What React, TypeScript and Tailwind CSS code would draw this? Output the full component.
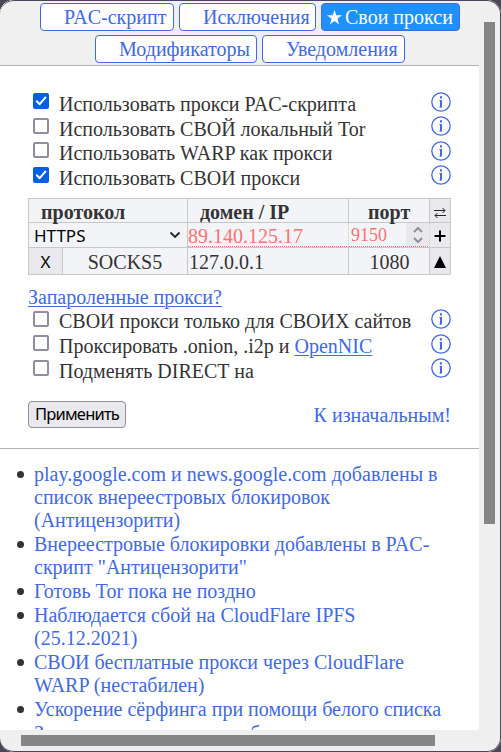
import React from 'react';

function Tab({ label, w, active, pad }: { label: string; w: string; active?: boolean; pad: string }) {
  return (
    <button
      className={`flex h-7 items-center whitespace-nowrap rounded-[4px] border text-[20px] leading-none ${w} ${pad} ${
        active ? 'border-[#4169e1] bg-[#1e90ff] text-white' : 'border-[#4169e1] bg-white text-[#4169e1]'
      }`}
    >
      {active && (
        <svg viewBox="0 0 14 14" className="mr-[3px] size-[15px] shrink-0" fill="currentColor">
          <path d="M7 0l1.7 5h5.3l-4.3 3.2 1.6 5.3L7 10.3l-4.3 3.2 1.6-5.3L0 5h5.3z" />
        </svg>
      )}
      <span>{label}</span>
    </button>
  );
}

function InfoIcon() {
  return (
    <svg viewBox="0 0 20 20" className="size-5 shrink-0" fill="none" stroke="#4169e1">
      <circle cx="10" cy="10" r="9.2" strokeWidth="1.3" />
      <path d="M10 8v7.500M10 4.300v2.200" strokeWidth="2" />
      <path d="M8.500 8.500H10M8.500 15H10" strokeWidth="1" />
    </svg>
  );
}

function Check({ on }: { on?: boolean }) {
  return on ? (
    <svg viewBox="0 0 16 16" className="block size-4 shrink-0">
      <rect width="16" height="16" rx="2" fill="#0060df" />
      <path d="M3.800 8.300l2.900 2.900 5.700-6.700" fill="none" stroke="#fff" strokeWidth="2" strokeLinecap="round" strokeLinejoin="round" />
    </svg>
  ) : (
    <span className="block size-4 shrink-0 rounded-[2px] border-2 border-[#8f8f9d] bg-white" />
  );
}

type Row = { on?: boolean; text: React.ReactNode; h: string; box: string; label: string };

function Option({ on, text, h, box, label }: Row) {
  return (
    <div className={`flex items-start pl-[33px] pr-[28px] ${h}`}>
      <div className={box}><Check on={on} /></div>
      <span className={`ml-[10px] flex-1 whitespace-nowrap leading-[23px] ${label}`}>{text}</span>
      <InfoIcon />
    </div>
  );
}

const link = 'underline decoration-1 underline-offset-2 text-[#4169e1]';

const news = [
  ['play.google.com и news.google.com добавлены в', 'список внереестровых блокировок', '(Антицензорити)'],
  ['Внереестровые блокировки добавлены в PAC-', 'скрипт "Антицензорити"'],
  ['Готовь Tor пока не поздно'],
  ['Наблюдается сбой на CloudFlare IPFS', '(25.12.2021)'],
  ['СВОИ бесплатные прокси через CloudFlare', 'WARP (нестабилен)'],
  ['Ускорение сёрфинга при помощи белого списка'],
  ['Знакомимся с новостями блога'],
];

export default function App() {
  return (
    <div className="h-[752px] w-[501px] overflow-hidden bg-[#4b4656]">
      <div className="relative flex h-[752px] w-[501px] flex-col overflow-hidden rounded-[14px] bg-[#efefef] font-['Liberation_Serif',serif] text-[20px] text-[#333]">
        <div className="flex h-[730px]">
          <main className="flex h-[730px] w-[479px] flex-col overflow-hidden bg-white">
            <header className="flex h-[66px] shrink-0 flex-col gap-1 border-b border-[#b3b3b3] bg-[#f0f0f0] pt-[3px]">
              <div className="flex gap-[5px] pl-10">
                <Tab label="PAC-скрипт" w="w-[134px]" pad="pl-[23px]" />
                <Tab label="Исключения" w="w-[137px]" pad="pl-[23px]" />
                <Tab label="Свои прокси" w="w-[139px]" pad="pl-[5px]" active />
              </div>
              <div className="flex gap-[5px] pl-[95px]">
                <Tab label="Модификаторы" w="w-[162px]" pad="pl-[23px]" />
                <Tab label="Уведомления" w="w-[143px]" pad="pl-[23px]" />
              </div>
            </header>
            <section className="flex h-[132px] shrink-0 flex-col pt-[26px]">
              <Option on text="Использовать прокси PAC-скрипта" h="h-[24px]" box="pt-px" label="pt-px" />
              <Option text="Использовать СВОЙ локальный Tor" h="h-[25px]" box="pt-[2px]" label="pt-[2px]" />
              <Option text="Использовать WARP как прокси" h="h-[24px]" box="pt-px" label="pt-px" />
              <Option on text="Использовать СВОИ прокси" h="h-[25px]" box="pt-[2px]" label="pt-[2px]" />
            </section>
            <div className="ml-[28px] flex h-[77px] w-[423px] shrink-0 flex-col divide-y divide-[#c8c8c8] border border-[#c8c8c8] bg-[#f3f4f7]">
              <div className="flex h-6 divide-x divide-[#c8c8c8] font-bold leading-[27px]">
                <span className="w-[159px] pl-3">протокол</span>
                <span className="w-[161px] pl-3">домен / IP</span>
                <span className="w-[81px] pl-[19px]">порт</span>
                <span className="flex flex-1 items-center justify-center bg-[#e9e9ed] pt-1">
                  <svg viewBox="0 0 12 12" className="size-3" fill="none" stroke="#222">
                    <path d="M0 3.500h11M8.500 1L11 3.500 8.500 6M12 8.500H1M3.500 6L1 8.500l2.500 2.500" />
                  </svg>
                </span>
              </div>
              <div className="flex h-[25px] divide-x divide-[#c8c8c8]">
                <span className="flex w-[159px] items-center justify-between pl-[5px] pr-[6px] font-['Noto_Sans',sans-serif] text-[17px] leading-none text-black">
                  HTTPS
                  <svg viewBox="0 0 12 8" className="h-2 w-3" fill="none" stroke="#222" strokeWidth="1.8"><path d="M1.500 1.500L6 6l4.500-4.500" /></svg>
                </span>
                <span className="w-[161px] border-b border-dotted border-b-[#ff6b6b] leading-[27px] text-[#f87272]">89.140.125.17</span>
                <span className="flex w-[81px] justify-between border-b border-dotted border-b-[#ff6b6b] pl-[2px] text-[18px] leading-[25px] text-[#f87272]">
                  9150
                  <span className="flex w-[23px] items-center justify-center bg-[#e9e9ed]">
                    <svg viewBox="0 0 10 16" className="h-4 w-2.5" fill="none" stroke="#8f8f9d" strokeWidth="2"><path d="M1 5l4-4 4 4M1 11l4 4 4-4" /></svg>
                  </span>
                </span>
                <span className="flex flex-1 items-center justify-center bg-[#e9e9ed] pt-px">
                  <svg viewBox="0 0 12 12" className="size-3" stroke="#000" strokeWidth="2"><path d="M6 .5v11M.5 6h11" /></svg>
                </span>
              </div>
              <div className="flex h-[26px] divide-x divide-[#c8c8c8] leading-[28px]">
                <span className="w-[34px] bg-[#e9e9ed] text-center font-['Noto_Sans',sans-serif] text-[17px] text-black">X</span>
                <span className="w-[125px] text-center">SOCKS5</span>
                <span className="w-[161px] pl-px">127.0.0.1</span>
                <span className="w-[81px] pl-px text-center">1080</span>
                <span className="flex flex-1 items-center justify-center bg-[#e9e9ed] pt-[2px]">
                  <svg viewBox="0 0 12 12" className="size-3"><path d="M6 0l6 12H0z" /></svg>
                </span>
              </div>
            </div>
            <div className="h-[34px] shrink-0 pl-[28px] pt-[11px] leading-[23px]"><a className={link}>Запароленные прокси?</a></div>
            <section className="flex h-[92px] shrink-0 flex-col">
              <Option text="СВОИ прокси только для СВОИХ сайтов" h="h-[25px]" box="pt-[2px]" label="pt-px" />
              <Option text={<>Проксировать .onion, .i2p и <a className={link}>OpenNIC</a></>} h="h-[24px]" box="pt-px" label="pt-px" />
              <Option text="Подменять DIRECT на" h="h-[25px]" box="pt-[2px]" label="pt-[2px]" />
            </section>
            <div className="flex h-[48px] shrink-0 items-start justify-between border-b border-[#b3b3b3] pl-[28px] pr-[28px]">
              <button className="h-[27px] w-[98px] whitespace-nowrap rounded-[4px] border border-[#8f8f9d] bg-[#e9e9ed] text-center font-['Noto_Sans',sans-serif] text-[16.500px] leading-none tracking-[-0.8px] text-black">Применить</button>
              <a className="pt-[3px] leading-[23px] text-[#4169e1]">К изначальным!</a>
            </div>
            <ul className="shrink-0 pt-[14px] text-[#4169e1]">
              {news.map((n) => (
                <li key={n[0]} className="mb-px flex whitespace-nowrap pl-[17px] leading-[23px]">
                  <span className="mr-[10px] mt-[8px] size-[7px] shrink-0 rounded-full bg-[#333]" />
                  <span>{n.map((t) => <span key={t} className="block">{t}</span>)}</span>
                </li>
              ))}
            </ul>
          </main>
          <div className="w-[22px] pl-[5px] pt-[22px]"><div className="h-[502px] w-[11px] bg-[#858585]" /></div>
        </div>
        <div className="h-[22px] pl-[21px] pt-[5px]"><div className="h-[11px] w-[414px] bg-[#858585]" /></div>
        <div className="pointer-events-none absolute inset-0 rounded-[14px] border border-l-0 border-[#4b4656]" />
      </div>
    </div>
  );
}
